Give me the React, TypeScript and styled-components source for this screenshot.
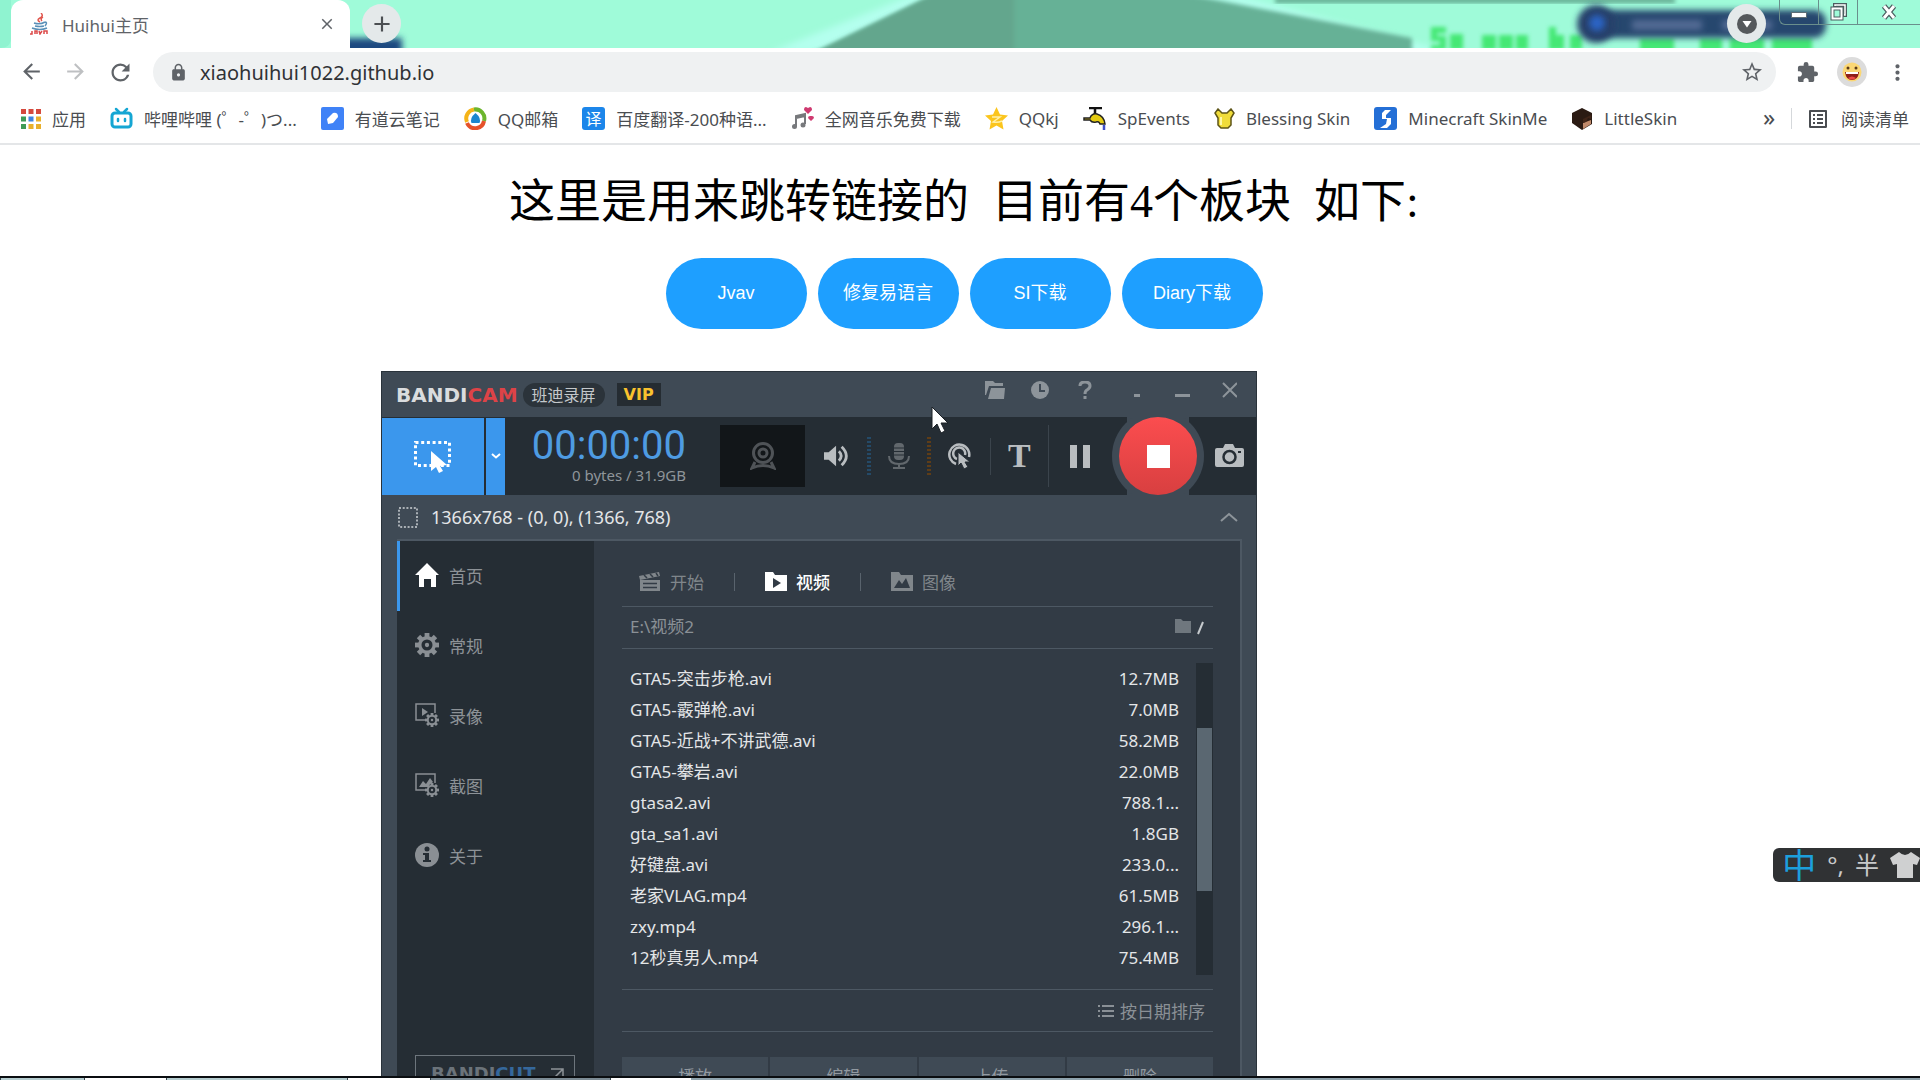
import React from "react";
import styled, { createGlobalStyle } from "styled-components";
import {
  MdAdd,
  MdArrowBack,
  MdArrowForward,
  MdClose,
  MdExtension,
  MdListAlt,
  MdLock,
  MdMoreVert,
  MdRefresh,
  MdStarBorder,
} from "react-icons/md";

const UI_FONT = `"Noto Sans", "Noto Sans CJK SC", sans-serif`;
const LOGO_FONT = `"DejaVu Sans", "Noto Sans CJK SC", sans-serif`;

const c = {
  panel: "#3f4a55",
  dark: "#252d34",
  body: "#323b45",
  line: "#4d5863",
  blue: "#3b97ed",
  grey: "#80868b",
  light: "#e4e6e8",
};

const GlobalStyle = createGlobalStyle`
  * { box-sizing: border-box; }
  body { margin: 0; font-family: ${UI_FONT}; background: #fff; }
  button { font: inherit; border: 0; padding: 0; background: none; color: inherit; cursor: pointer; }
  a { color: inherit; text-decoration: none; }
  svg { display: block; flex: none; }
`;

/* ---------- browser ---------- */

const Screen = styled.div`
  display: flex;
  flex-direction: column;
  height: 100vh;
  overflow: hidden;
`;

const TabStrip = styled.div`
  position: relative;
  display: flex;
  height: 48px;
  padding-left: 11px;
  background: #9ffbd9;
`;

const Wallpaper = styled.svg`
  position: absolute;
  inset: 0;
  width: 100%;
  height: 100%;
`;

const BrowserTab = styled.div`
  position: relative;
  display: flex;
  align-items: center;
  gap: 11px;
  width: 339px;
  padding: 0 14px 0 18px;
  border-radius: 12px 12px 0 0;
  background: #fff;
  color: #5f6368;
  font-size: 17px;
`;

const TabTitle = styled.span`
  flex: 1;
`;

const RoundButton = styled.button`
  position: relative;
  display: flex;
  align-items: center;
  justify-content: center;
  width: 39px;
  height: 39px;
  margin: 4px 0 0 12px;
  border-radius: 50%;
  background: #e4e9ea;
  color: #4b4f52;
`;

const StripEnd = styled.div`
  display: flex;
  gap: 13px;
  margin-left: auto;
`;

const WindowControls = styled.div`
  position: relative;
  display: flex;
  width: 141px;
  height: 25px;
  border: 1px solid #6a8f8c;
  border-width: 0 0 1px 1px;
  border-radius: 0 0 0 6px;
`;

const WindowControl = styled.button<{ $grow?: boolean }>`
  display: flex;
  align-items: center;
  justify-content: center;
  flex: ${(p) => (p.$grow ? 1 : "none")};
  width: 39px;
  border-right: ${(p) => (p.$grow ? 0 : "1px solid #6a8f8c")};
`;

const Toolbar = styled.div`
  display: flex;
  align-items: center;
  height: 48px;
  padding: 0 10px 0 19px;
  color: #5f6368;
`;

const NavButtons = styled.div`
  display: flex;
  gap: 19px;
`;

const IconButton = styled.button<{ $faded?: boolean }>`
  display: flex;
  opacity: ${(p) => (p.$faded ? 0.4 : 1)};
`;

const Omnibox = styled.form`
  display: flex;
  align-items: center;
  flex: 1;
  gap: 12px;
  height: 40px;
  margin: 0 20px 0 19px;
  padding: 0 12px 0 16px;
  border-radius: 20px;
  background: #eff1f2;
`;

const Address = styled.input`
  flex: 1;
  min-width: 0;
  padding: 0;
  border: 0;
  outline: 0;
  background: none;
  color: #303236;
  font: 20px ${UI_FONT};
`;

const ToolbarEnd = styled.div`
  display: flex;
  align-items: center;
  gap: 18px;
`;

const Bookmarks = styled.nav`
  display: flex;
  align-items: center;
  gap: 24px;
  height: 49px;
  padding: 0 11px 2px 21px;
  border-bottom: 2px solid #e4e6e8;
  color: #4a4d51;
  font-size: 17px;
  white-space: nowrap;
`;

const Bookmark = styled.a`
  display: flex;
  align-items: center;
  gap: 11px;
`;

const BookmarksEnd = styled.div`
  display: flex;
  align-items: center;
  gap: 14px;
  margin-left: auto;
`;

const Chevrons = styled.button`
  width: 16px;
  padding-bottom: 4px;
  font-size: 24px;
  line-height: 24px;
`;

const Rule = styled.span<{ $h: number; $color: string }>`
  flex: none;
  width: 1px;
  height: ${(p) => p.$h}px;
  background: ${(p) => p.$color};
`;

/* ---------- page ---------- */

const Page = styled.main`
  position: relative;
  flex: 1;
  min-height: 0;
  padding: 29px 0 0 8px;
  overflow: hidden;
  text-align: center;
`;

const Heading = styled.h1`
  margin: 0 0 28px;
  color: #000;
  font: 400 46px/56px "Liberation Serif", "Noto Sans CJK SC", serif;
  white-space: pre;
`;

const Links = styled.div`
  display: flex;
  justify-content: center;
  gap: 11px;
`;

const PillLink = styled.a`
  width: 141px;
  border-radius: 36px;
  background: #1e9fff;
  color: #fff;
  font: 18px/71px "Liberation Sans", "Noto Sans CJK SC", sans-serif;
`;

const Pointer = styled.svg`
  position: absolute;
  left: 931px;
  top: 261px;
`;

const Ime = styled.div`
  position: absolute;
  right: 0;
  top: 703px;
  display: flex;
  align-items: center;
  gap: 11px;
  height: 34px;
  padding-left: 9px;
  border-radius: 6px 0 0 6px;
  background: #303234;
  color: #c9cacb;
  font-size: 24px;
  line-height: 34px;
`;

const ImeMode = styled.span`
  color: #1c9fdc;
  font-size: 34px;
`;

const TaskbarEdge = styled.div`
  display: flex;
  height: 4px;
  border-top: 2px solid #0a0d10;
  background: #8fa3ad;
`;

const TaskButton = styled.span<{ $w: number; $color: string }>`
  width: ${(p) => p.$w}px;
  border-left: 1px solid #35424a;
  background: ${(p) => p.$color};
`;

/* ---------- recorder window ---------- */

const Recorder = styled.section`
  position: absolute;
  left: 381px;
  top: 226px;
  width: 876px;
  border: 1px solid #2a333b;
  background: ${c.panel};
  color: ${c.light};
  font-size: 17px;
  text-align: left;
`;

const TitleBar = styled.header`
  display: flex;
  align-items: center;
  height: 45px;
  padding: 0 19px 0 14px;
`;

const Brand = styled.span<{ $size: number; $color: string; $accent: string }>`
  color: ${(p) => p.$color};
  font: 700 ${(p) => p.$size}px/24px ${LOGO_FONT};

  b {
    color: ${(p) => p.$accent};
  }
`;

const Edition = styled.span`
  margin-left: 5px;
  padding: 0 9px;
  border-radius: 12px;
  background: #2b333a;
  color: #c4c8cb;
  font-size: 16px;
  line-height: 24px;
`;

const Vip = styled.span`
  margin-left: 12px;
  padding: 0 7px;
  background: #252c32;
  color: #f9c22e;
  font: 700 16px/23px ${LOGO_FONT};
`;

const TitleTools = styled.div`
  display: flex;
  align-items: center;
  gap: 26px;
  margin: 0 0 10px auto;
  color: #8d949a;
`;

const ControlBar = styled.div`
  display: flex;
  align-items: center;
  height: 78px;
  background: ${c.dark};
`;

const AreaButton = styled.button<{ $w: number }>`
  display: flex;
  align-items: center;
  justify-content: center;
  width: ${(p) => p.$w}px;
  height: 77px;
  margin-right: 2px;
  background: ${c.blue};
`;

const Clock = styled.div`
  width: 179px;
  text-align: right;
`;

const Timer = styled.div`
  color: #4e9be2;
  font: 400 40px/38px Roboto, sans-serif;
`;

const Usage = styled.div`
  color: #8f959a;
  font-size: 15px;
  line-height: 20px;
`;

const Webcam = styled.div`
  display: flex;
  align-items: center;
  justify-content: center;
  width: 85px;
  height: 62px;
  margin-left: 34px;
  background: #121619;
`;

const Devices = styled.div`
  display: flex;
  align-items: center;
  gap: 17px;
  padding-left: 19px;
`;

const PauseSlot = styled.div`
  display: flex;
  justify-content: center;
  flex: 1;
`;

const Meter = styled.span<{ $color: string }>`
  width: 4px;
  height: 38px;
  background: repeating-linear-gradient(${(p) => p.$color} 0 2px, transparent 2px 4px);
`;

const TextTool = styled.span`
  font: 700 34px/34px "Liberation Serif", serif;
  color: #b9bdc0;
`;

const RecordWell = styled.div`
  display: flex;
  align-items: center;
  height: 78px;
  margin-right: 11px;
`;

const RegionRow = styled.div`
  display: flex;
  align-items: center;
  gap: 13px;
  height: 44px;
  padding: 0 18px 0 16px;
  font-size: 18px;
  line-height: 24px;
`;

const RegionText = styled.span`
  flex: 1;
`;

const Workspace = styled.div`
  display: flex;
  margin: 0 14px 0 15px;
  border: 1px solid ${c.line};
  border-width: 2px 2px 0 0;
  background: ${c.body};
`;

const Sidebar = styled.nav`
  display: flex;
  flex-direction: column;
  width: 197px;
  background: ${c.dark};
`;

const MenuItem = styled.a<{ $active?: boolean }>`
  display: flex;
  align-items: center;
  gap: 10px;
  height: 70px;
  padding: 0 0 2px 15px;
  border-left: 3px solid ${(p) => (p.$active ? c.blue : "transparent")};
  color: #8d9297;
`;

const CutLink = styled.a`
  display: flex;
  align-items: center;
  justify-content: space-between;
  height: 38px;
  margin: auto 19px 0 18px;
  padding: 0 10px 0 15px;
  border: 1px solid #6d757c;
  color: #8d9297;
`;

const Content = styled.div`
  flex: 1;
  padding: 16px 27px 0 28px;
`;

const MediaTabs = styled.div`
  display: flex;
  align-items: center;
  gap: 30px;
  height: 50px;
  padding-left: 17px;
  border-bottom: 1px solid ${c.line};
`;

const MediaTab = styled.button<{ $active?: boolean }>`
  display: flex;
  align-items: center;
  gap: 9px;
  color: ${(p) => (p.$active ? "#fff" : c.grey)};
  font-weight: ${(p) => (p.$active ? 500 : 400)};
`;

const PathRow = styled.div<{ $end?: boolean }>`
  display: flex;
  align-items: center;
  justify-content: ${(p) => (p.$end ? "flex-end" : "flex-start")};
  gap: 4px;
  height: 42px;
  padding: 0 8px 4px;
  border-bottom: 1px solid ${c.line};
  color: #8a9096;
`;

const PathText = styled.span`
  flex: 1;
`;

const SortButton = styled.button`
  display: flex;
  align-items: center;
  gap: 6px;
  padding-top: 4px;
`;

const FileArea = styled.div`
  display: flex;
  gap: 17px;
  padding: 14px 0;
  border-bottom: 1px solid ${c.line};
`;

const FileTable = styled.table`
  flex: 1;
  align-self: flex-start;
  border-collapse: collapse;

  td {
    height: 31px;
    padding: 0 0 0 8px;
    line-height: 24px;
  }
  td:last-child {
    padding: 0;
    text-align: right;
  }
`;

const Track = styled.div`
  width: 17px;
  padding: 65px 1px 84px;
  background: ${c.dark};
`;

const Thumb = styled.div`
  height: 163px;
  background: #5a6771;
`;

const Actions = styled.div`
  display: grid;
  grid-template-columns: repeat(4, 1fr);
  gap: 2px;
  padding-top: 25px;
`;

const Action = styled.button`
  height: 36px;
  background: ${c.panel};
  color: #9299a0;
`;

/* ---------- drawings ---------- */

const Gear = ({ x, y, r, color, hole }: { x: number; y: number; r: number; color: string; hole: string }) => (
  <g transform={`translate(${x} ${y})`} fill={color}>
    {[0, 45, 90, 135].map((a) => (
      <rect key={a} x={-r * 0.2} y={-r} width={r * 0.4} height={r * 2} transform={`rotate(${a})`} />
    ))}
    <circle r={r * 0.74} />
    <circle r={r * 0.46} fill={hole} />
    <circle r={r * 0.18} />
  </g>
);

const bookmarks: { label: string; icon: React.ReactNode }[] = [
  {
    label: "应用",
    icon: (
      <svg width="20" height="20" viewBox="0 0 20 20">
        {["#d5493d", "#d5493d", "#d5493d", "#3f9b56", "#3f83e0", "#e8b02c", "#3f9b56", "#e8b02c", "#e8b02c"].map(
          (f, i) => (
            <rect key={i} x={(i % 3) * 7.5} y={Math.floor(i / 3) * 7.5} width="5" height="5" fill={f} />
          ),
        )}
      </svg>
    ),
  },
  {
    label: "哔哩哔哩 (゜-゜)つ...",
    icon: (
      <svg width="23" height="23" viewBox="0 0 23 23" fill="none" stroke="#15a6d3" strokeWidth="3" strokeLinecap="round">
        <rect x="2" y="6" width="19" height="14" rx="3" />
        <path d="M6 2l3 3M17 2l-3 3M8 12v2M15 12v2" strokeWidth="2.5" />
      </svg>
    ),
  },
  {
    label: "有道云笔记",
    icon: (
      <svg width="23" height="23" viewBox="0 0 23 23">
        <rect width="23" height="23" rx="2" fill="#3f82f7" />
        <path d="M7 17l-1-5 6-6q5-1 5 4l-5 6z" fill="#fff" />
      </svg>
    ),
  },
  {
    label: "QQ邮箱",
    icon: (
      <svg width="23" height="23" viewBox="0 0 23 23" fill="none" strokeWidth="4">
        <path d="M3 15A9 9 0 0 1 10 2.500" stroke="#f5b419" />
        <path d="M10 2.500A9 9 0 0 1 20 14" stroke="#6cb52d" />
        <path d="M20 14A9 9 0 0 1 3 16" stroke="#e5512a" />
        <path d="M11.500 6q6 5 4 10h-8q-2-5 4-10z" fill="#1b86cf" />
      </svg>
    ),
  },
  {
    label: "百度翻译-200种语...",
    icon: (
      <svg width="23" height="23" viewBox="0 0 23 23">
        <rect width="23" height="23" rx="3" fill="#1c86ea" />
        <text x="11.500" y="17.500" textAnchor="middle" fill="#fff" fontSize="16" fontFamily="Noto Sans CJK SC">
          译
        </text>
      </svg>
    ),
  },
  {
    label: "全网音乐免费下载",
    icon: (
      <svg width="23" height="23" viewBox="0 0 23 23">
        <path d="M5 19V9l9-2v10M5 11l9-2" fill="none" stroke="#77797c" strokeWidth="2" />
        <circle cx="3.500" cy="19.500" r="2.500" fill="#77797c" />
        <circle cx="12" cy="18" r="2.500" fill="#77797c" />
        <path d="M17 7l-4-4q0-3 2-3l2 1 2-1q2 0 2 3zM20 14l-3-3q0-2 2-2h2q2 0 2 2z" fill="#cf3a70" />
      </svg>
    ),
  },
  {
    label: "QQkj",
    icon: (
      <svg width="23" height="23" viewBox="0 0 23 23">
        <path d="M11.500 0l3.500 7.500 8 1-6 5.500 1.500 8.500-7-4-7 4L6 14 0 8.500l8-1z" fill="#fbc51d" />
        <path d="M7 10h8l-7 5q5 1 9-1" fill="none" stroke="#fff0a8" strokeWidth="1.500" />
      </svg>
    ),
  },
  {
    label: "SpEvents",
    icon: (
      <svg width="24" height="23" viewBox="0 0 24 23">
        <path d="M6 1h13M12 1v6" stroke="#111" strokeWidth="2.500" />
        <path d="M1 11h6q2-5 7-4 7 2 8 10h-5q-1-3-4-2-4 1-6-2H1z" fill="#e4cb12" stroke="#222" strokeWidth="1.500" />
        <path d="M21 18v5" stroke="#3e4fc9" strokeWidth="2.500" />
      </svg>
    ),
  },
  {
    label: "Blessing Skin",
    icon: (
      <svg width="21" height="21" viewBox="0 0 21 21">
        <path
          d="M4 1l4 4h5l4-4 3 4-3 5v7l-3 3H7l-3-3v-7L1 5z"
          fill="#f0dc3a"
          stroke="#5d5417"
          strokeWidth="1.500"
        />
        <path d="M7 9v8" stroke="#fff8a8" strokeWidth="2" />
      </svg>
    ),
  },
  {
    label: "Minecraft SkinMe",
    icon: (
      <svg width="23" height="23" viewBox="0 0 23 23">
        <rect width="23" height="23" rx="3" fill="#246fd6" />
        <path d="M17 3h-6L8 6v6h5l-1 5-6 4h7l4-4v-6h-5V8z" fill="#fff" />
      </svg>
    ),
  },
  {
    label: "LittleSkin",
    icon: (
      <svg width="22" height="22" viewBox="0 0 22 22">
        <path d="M11 0l10 5v11l-10 6L1 15V5z" fill="#2b1b13" />
        <path d="M12 15l8-3v4l-8 5z" fill="#c08a6b" />
        <path d="M12 11l8-4v4l-3-1-2 4-3 1z" fill="#402518" />
      </svg>
    ),
  },
];

const MenuIcon = ({ kind }: { kind: string }) => {
  const g = "#8a8f94";
  return (
    <svg width="24" height="24" viewBox="0 0 24 24" fill={g}>
      {kind === "home" && <path d="M12 0l12 12h-3v12h-5v-8H9v8H4V12H0z" fill="#fff" />}
      {kind === "gear" && <Gear x={12} y={12} r={12} color={g} hole={c.dark} />}
      {(kind === "video" || kind === "shot") && (
        <>
          <path d="M10 17H1V1h19v9" fill="none" stroke={g} strokeWidth="1.500" />
          {kind === "video" ? (
            <path d="M7 5l6 4-6 4z" />
          ) : (
            <path d="M4 14l4-6 3 3 4-6 3 4-6 5z" />
          )}
          <Gear x={17} y={17} r={7} color={g} hole={c.dark} />
        </>
      )}
      {kind === "info" && (
        <>
          <circle cx="12" cy="12" r="12" />
          <circle cx="12" cy="6" r="2.500" fill={c.dark} />
          <path d="M8 10h6v7h2v2H8v-2h2v-5H8z" fill={c.dark} />
        </>
      )}
    </svg>
  );
};

const TabIcon = ({ kind, active }: { kind: string; active?: boolean }) => (
  <svg width="22" height="19" viewBox="0 0 22 19" fill={active ? "#fff" : c.grey}>
    {kind === "start" ? (
      <>
        <path d="M0 4l20-4 1 4L1 8z" />
        <path d="M5 3l3 3M11 2l3 3M17 1l2 3" stroke={c.body} strokeWidth="1.500" />
        <path d="M1 8h20v11H1z" />
        <path d="M4 11.500h14M4 15.500h14" stroke={c.body} strokeWidth="1.500" />
      </>
    ) : (
      <>
        <path d="M0 0h8l2 3h12v16H0z" />
        {kind === "video" ? (
          <path d="M8 6l8 5-8 5z" fill={c.body} />
        ) : (
          <path d="M3 16l5-8 3 4 4-6 4 10z" fill={c.body} />
        )}
      </>
    )}
  </svg>
);

const menu = [
  ["home", "首页"],
  ["gear", "常规"],
  ["video", "录像"],
  ["shot", "截图"],
  ["info", "关于"],
];

const files = [
  ["GTA5-突击步枪.avi", "12.7MB"],
  ["GTA5-霰弹枪.avi", "7.0MB"],
  ["GTA5-近战+不讲武德.avi", "58.2MB"],
  ["GTA5-攀岩.avi", "22.0MB"],
  ["gtasa2.avi", "788.1..."],
  ["gta_sa1.avi", "1.8GB"],
  ["好键盘.avi", "233.0..."],
  ["老家VLAG.mp4", "61.5MB"],
  ["zxy.mp4", "296.1..."],
  ["12秒真男人.mp4", "75.4MB"],
];

const BrowserChrome = () => (
  <header>
    <TabStrip>
      <Wallpaper viewBox="0 0 1920 48" preserveAspectRatio="none" aria-hidden="true">
        <defs>
          <filter id="soft" x="-20%" y="-50%" width="140%" height="200%">
            <feGaussianBlur stdDeviation="3" />
          </filter>
          <filter id="edge" x="-5%" y="-20%" width="110%" height="140%">
            <feGaussianBlur stdDeviation="2" />
          </filter>
        </defs>
        <path d="M770 52L910-4h330l210 56z" fill="#b4ffee" filter="url(#soft)" />
        <path d="M812 54L935-6h250l227 44v16z" fill="#66b196" filter="url(#edge)" />
        <path d="M812 54L935-6h79v60z" fill="#64a68d" filter="url(#edge)" />
        <path d="M1275-2h400v5h-400z" fill="#5fa68c" filter="url(#edge)" />
        <g fill="#45e874" filter="url(#edge)">
          <path d="M1431 27h15v6h-9v3h9v14h-15v-5h9v-4h-9zM1450 34h13v16h-13z" />
          <path d="M1482 35h14v15h-14zM1499 35h14v15h-14zM1516 35h12v15h-12zM1549 27h7v8h8v15h-15zM1570 35h12v15h-12z" />
          <path d="M1640 38h34v14h-34zM1700 38h22v14h-22zM1730 38h34v14h-34zM1772 38h40v14h-40z" />
        </g>
        <rect x="1590" y="10" width="236" height="28" rx="12" fill="#28466e" filter="url(#soft)" />
        <circle cx="1596" cy="24" r="19" fill="#25406a" filter="url(#soft)" />
        <circle cx="1597" cy="23" r="8" fill="#2c63c4" filter="url(#soft)" />
        <path d="M1632 20h70v10h-70zM1722 20h50v10h-50z" fill="#536a94" filter="url(#soft)" />
        <rect x="340" y="38" width="62" height="18" fill="#1f4a80" filter="url(#soft)" />
        <path d="M0 48V0h11v38q0 10-11 10z" fill="#8ff3d0" />
      </Wallpaper>
      <BrowserTab>
        <svg width="22" height="22" viewBox="0 0 22 22" fill="none">
          <path d="M12 0q3 3-1 5t0 4M14 4q-3 2-1 4" stroke="#e0574f" strokeWidth="1.500" />
          <path d="M5 10q6 2 11-1M6 13q5 1 9 0M3 15q8 3 15 0M16 9q3 0 0 4" stroke="#5a90b8" strokeWidth="1.500" />
          <path d="M3 18v3H1M6 21v-3h2v3M10 18l1 3 2-3M15 21v-3h3v3" stroke="#dc4a4a" strokeWidth="1.500" />
        </svg>
        <TabTitle>Huihui主页</TabTitle>
        <IconButton aria-label="关闭标签页">
          <MdClose size={18} />
        </IconButton>
      </BrowserTab>
      <RoundButton aria-label="新标签页">
        <MdAdd size={26} />
      </RoundButton>
      <StripEnd>
        <RoundButton aria-label="搜索标签页">
          <svg width="22" height="22" viewBox="0 0 22 22">
            <circle cx="11" cy="11" r="10" fill="#55595c" />
            <path d="M6.500 8h9L11 14.500z" fill="#fff" />
          </svg>
        </RoundButton>
        <WindowControls>
          <WindowControl aria-label="最小化">
            <svg width="16" height="16" viewBox="0 0 16 16">
              <rect x="0.500" y="8.500" width="15" height="5" fill="#fff" stroke="#5d6c75" />
            </svg>
          </WindowControl>
          <WindowControl aria-label="还原">
            <svg width="18" height="18" viewBox="0 0 18 18" fill="none">
              <path d="M6 4V2h10v10h-2" stroke="#4b5c5f" strokeWidth="4" />
              <path d="M6 3V2h10v10h-1" stroke="#fff" strokeWidth="1.500" />
              <rect x="3.500" y="5.500" width="9" height="10" stroke="#4b5c5f" strokeWidth="4" />
              <rect x="3.500" y="5.500" width="9" height="10" stroke="#fff" strokeWidth="2" />
            </svg>
          </WindowControl>
          <WindowControl $grow aria-label="关闭">
            <svg width="16" height="16" viewBox="0 0 16 16">
              <path d="M3 2l10 12M13 2L3 14" stroke="#4b5c5f" strokeWidth="5.500" />
              <path d="M3 2l10 12M13 2L3 14" stroke="#fff" strokeWidth="3" />
            </svg>
          </WindowControl>
        </WindowControls>
      </StripEnd>
    </TabStrip>

    <Toolbar>
      <NavButtons>
        <IconButton aria-label="后退">
          <MdArrowBack size={25} />
        </IconButton>
        <IconButton $faded aria-label="前进">
          <MdArrowForward size={25} />
        </IconButton>
        <IconButton aria-label="重新加载">
          <MdRefresh size={27} />
        </IconButton>
      </NavButtons>
      <Omnibox>
        <MdLock size={19} />
        <Address aria-label="地址" defaultValue="xiaohuihui1022.github.io" />
        <IconButton type="button" aria-label="添加书签">
          <MdStarBorder size={24} />
        </IconButton>
      </Omnibox>
      <ToolbarEnd>
        <IconButton aria-label="扩展程序">
          <MdExtension size={23} />
        </IconButton>
        <IconButton aria-label="个人资料">
          <svg width="30" height="30" viewBox="0 0 30 30">
            <circle cx="15" cy="15" r="15" fill="#dcdcdc" />
            <circle cx="15" cy="15" r="9.500" fill="#fbd774" />
            <circle cx="11" cy="11" r="1.500" fill="#5a3a1a" />
            <circle cx="19" cy="11" r="1.500" fill="#5a3a1a" />
            <path d="M8 15h14q-1 8-7 8t-7-8z" fill="#8f1f18" />
            <path d="M9 15h12v2H9z" fill="#fff" />
            <path d="M11 21q4-3 8 0-4 3-8 0z" fill="#ef4b45" />
          </svg>
        </IconButton>
        <IconButton aria-label="菜单">
          <MdMoreVert size={25} />
        </IconButton>
      </ToolbarEnd>
    </Toolbar>

    <Bookmarks>
      {bookmarks.map((b) => (
        <Bookmark key={b.label} href="#">
          {b.icon}
          {b.label}
        </Bookmark>
      ))}
      <BookmarksEnd>
        <Chevrons aria-label="更多书签">»</Chevrons>
        <Rule $h={21} $color="#d5d8db" />
        <Bookmark href="#">
          <MdListAlt size={24} />
          阅读清单
        </Bookmark>
      </BookmarksEnd>
    </Bookmarks>
  </header>
);

const RecorderWindow = () => (
  <Recorder>
    <TitleBar>
      <Brand $size={20} $color="#dadcde" $accent="#dd4347">
        BANDI<b>CAM</b>
      </Brand>
      <Edition>班迪录屏</Edition>
      <Vip>VIP</Vip>
      <TitleTools>
        <IconButton aria-label="打开文件夹">
          <svg width="20" height="18" viewBox="0 0 20 18" fill="currentColor">
            <path d="M0 14V0h8l2 2h8v3H4L1 14z" />
            <path d="M6 7h14l-1 11H3z" />
          </svg>
        </IconButton>
        <IconButton aria-label="定时录制">
          <svg width="18" height="18" viewBox="0 0 18 18">
            <circle cx="9" cy="9" r="9" fill="currentColor" />
            <path d="M9 3v7h5" fill="none" stroke={c.panel} strokeWidth="2" />
          </svg>
        </IconButton>
        <IconButton aria-label="帮助">
          <svg width="20" height="18" viewBox="0 0 20 18" fill="none" stroke="currentColor" strokeWidth="3">
            <path d="M5 5q0-4 5-4t5 4q0 2-3 4-2 1-2 4M10 15v3" />
          </svg>
        </IconButton>
        <IconButton aria-label="最小化到托盘">
          <svg width="28" height="18" viewBox="0 0 28 18" fill="currentColor">
            <rect x="13" y="13" width="6" height="3" />
          </svg>
        </IconButton>
        <IconButton aria-label="最小化">
          <svg width="18" height="18" viewBox="0 0 18 18" fill="currentColor">
            <rect x="0" y="13" width="15" height="3" />
          </svg>
        </IconButton>
        <IconButton aria-label="关闭">
          <svg width="18" height="18" viewBox="0 0 18 18" stroke="currentColor" strokeWidth="2">
            <path d="M4 2l14 14M18 2L4 16" />
          </svg>
        </IconButton>
      </TitleTools>
    </TitleBar>

    <ControlBar>
      <AreaButton $w={102} aria-label="矩形录制">
        <svg width="38" height="34" viewBox="0 0 38 34">
          <rect x="1.500" y="3.500" width="34" height="23" fill="none" stroke="#fff" strokeWidth="3" strokeDasharray="3 2.700" />
          <path d="M17 12v20l5-4 3 6 4-2-3-5 7-1z" fill="#fff" />
        </svg>
      </AreaButton>
      <AreaButton $w={19} aria-label="录制模式">
        <svg width="10" height="6" viewBox="0 0 10 6" fill="none" stroke="#fff" strokeWidth="2">
          <path d="M1 1l4 3.500L9 1" />
        </svg>
      </AreaButton>
      <Clock>
        <Timer>00:00:00</Timer>
        <Usage>0 bytes / 31.9GB</Usage>
      </Clock>
      <Webcam>
        <svg width="26" height="28" viewBox="0 0 26 28" fill="none" stroke="#4f5357" strokeWidth="3">
          <circle cx="13" cy="11" r="9.500" />
          <circle cx="13" cy="11" r="4" />
          <path d="M5 20l-3 6q11-5 22 0l-3-6" />
        </svg>
      </Webcam>
      <Devices>
        <IconButton aria-label="扬声器">
          <svg width="26" height="24" viewBox="0 0 28 24" fill="none" stroke="#b9bdc0" strokeWidth="3">
            <path d="M0 8h5l8-7v22l-8-7H0z" fill="#b9bdc0" stroke="none" />
            <path d="M16 7q5 5 0 10M19 2q10 10 0 20" />
          </svg>
        </IconButton>
        <Meter $color="#244a68" />
        <IconButton aria-label="麦克风">
          <svg width="22" height="26" viewBox="0 0 22 26" fill="none" stroke="#62686d" strokeWidth="2">
            <rect x="6" y="0" width="10" height="17" rx="4" fill="#62686d" stroke="none" />
            <path d="M1 13q0 8 10 8t10-8M11 21v4M5 25h12" />
            <path d="M6 5h10M6 8.500h10M6 12h10" stroke={c.dark} strokeWidth="1" />
          </svg>
        </IconButton>
        <Meter $color="#5f3d17" />
        <IconButton aria-label="鼠标效果">
          <svg width="25" height="26" viewBox="0 0 25 26" fill="none" stroke="#b9bdc0" strokeWidth="2.500">
            <path d="M8 21a10 10 0 1 1 13-7M9 16a6 6 0 1 1 8-4" />
            <path d="M10 9v14l3-3 3 6 4-2-3-5h5z" fill="#b9bdc0" stroke={c.dark} strokeWidth="1" />
          </svg>
        </IconButton>
        <Rule $h={37} $color="#3b444c" />
        <IconButton aria-label="文字">
          <TextTool>T</TextTool>
        </IconButton>
        <Rule $h={62} $color="#3b444c" />
      </Devices>
      <PauseSlot>
        <IconButton aria-label="暂停">
          <svg width="20" height="23" viewBox="0 0 20 23" fill="#b9bdc0">
            <path d="M0 0h7v23H0zM13 0h7v23h-7z" />
          </svg>
        </IconButton>
      </PauseSlot>
      <RecordWell>
        <IconButton aria-label="停止">
          <svg width="92" height="78" viewBox="0 0 92 78">
            <defs>
              <linearGradient id="rec" x2="0" y2="1">
                <stop stopColor="#fb4d4f" />
                <stop offset="1" stopColor="#d83f40" />
              </linearGradient>
            </defs>
            <path d="M15 0h62v78H15z" fill={c.panel} />
            <circle cx="46" cy="39" r="46" fill={c.panel} />
            <circle cx="46" cy="39" r="39" fill="url(#rec)" />
            <path d="M35 28h23v23H35z" fill="#fff" />
          </svg>
        </IconButton>
      </RecordWell>
      <IconButton aria-label="截图">
        <svg width="41" height="24" viewBox="0 0 41 24">
          <path d="M2 4h6l2-4h8l2 4h7q2 0 2 2v15q0 2-2 2H2q-2 0-2-2V6q0-2 2-2z" fill="#b9bdc0" />
          <circle cx="14.500" cy="13" r="6" fill="none" stroke={c.dark} strokeWidth="2.500" />
          <rect x="23" y="7" width="3" height="2" fill={c.dark} />
        </svg>
      </IconButton>
    </ControlBar>

    <RegionRow>
      <svg width="20" height="21" viewBox="0 0 20 21" fill="none" stroke="#cfd3d6" strokeWidth="1.500">
        <rect x="1" y="1" width="18" height="19" strokeDasharray="2 1.700" />
      </svg>
      <RegionText>1366x768 - (0, 0), (1366, 768)</RegionText>
      <IconButton aria-label="收起">
        <svg width="18" height="10" viewBox="0 0 18 10" fill="none" stroke="#8d949a" strokeWidth="2">
          <path d="M1 9l8-7 8 7" />
        </svg>
      </IconButton>
    </RegionRow>

    <Workspace>
      <Sidebar>
        {menu.map(([kind, label], i) => (
          <MenuItem key={kind} href="#" $active={i === 0}>
            <MenuIcon kind={kind} />
            {label}
          </MenuItem>
        ))}
        <CutLink href="#">
          <Brand $size={18} $color="#6b737a" $accent="#35689c">
            BANDI<b>CUT</b>
          </Brand>
          <svg width="13" height="13" viewBox="0 0 13 13" fill="none" stroke="#8d9297" strokeWidth="1.500">
            <path d="M0 1h12v12M12 1L1 12" />
          </svg>
        </CutLink>
      </Sidebar>
      <Content>
        <MediaTabs>
          <MediaTab>
            <TabIcon kind="start" />
            开始
          </MediaTab>
          <Rule $h={18} $color="#59636d" />
          <MediaTab $active>
            <TabIcon kind="video" active />
            视频
          </MediaTab>
          <Rule $h={18} $color="#59636d" />
          <MediaTab>
            <TabIcon kind="image" />
            图像
          </MediaTab>
        </MediaTabs>
        <PathRow>
          <PathText>E:\视频2</PathText>
          <svg width="16" height="14" viewBox="0 0 16 14" fill="#6f777e">
            <path d="M0 0h6l2 2h8v12H0z" />
          </svg>
          <svg width="10" height="18" viewBox="0 0 10 18" stroke="#c6cacd" strokeWidth="2">
            <path d="M8 5L3 17" />
          </svg>
        </PathRow>
        <FileArea>
          <FileTable>
            <tbody>
              {files.map(([name, size]) => (
                <tr key={name}>
                  <td>{name}</td>
                  <td>{size}</td>
                </tr>
              ))}
            </tbody>
          </FileTable>
          <Track>
            <Thumb />
          </Track>
        </FileArea>
        <PathRow $end>
          <SortButton>
            <svg width="16" height="12" viewBox="0 0 16 12" stroke="#8a9096" strokeWidth="2">
              <path d="M0 1h2M4 1h12M0 6h2M4 6h12M0 11h2M4 11h12" />
            </svg>
            按日期排序
          </SortButton>
        </PathRow>
        <Actions>
          <Action>播放</Action>
          <Action>编辑</Action>
          <Action>上传</Action>
          <Action>删除</Action>
        </Actions>
      </Content>
    </Workspace>
  </Recorder>
);

export default function App() {
  return (
    <Screen>
      <GlobalStyle />
      <BrowserChrome />
      <Page>
        <Heading>{"这里是用来跳转链接的  目前有4个板块  如下:"}</Heading>
        <Links>
          <PillLink href="#">Jvav</PillLink>
          <PillLink href="#">修复易语言</PillLink>
          <PillLink href="#">SI下载</PillLink>
          <PillLink href="#">Diary下载</PillLink>
        </Links>
        <RecorderWindow />
        <Pointer width="18" height="29" viewBox="0 0 18 29">
          <path d="M1 1v22l5-5 4 9 4-2-4-8h7z" fill="#fff" stroke="#1b2025" />
        </Pointer>
        <Ime>
          <ImeMode>中</ImeMode>
          <span>°,</span>
          <span>半</span>
          <svg width="30" height="26" viewBox="0 0 30 26" fill="#cfd0d1">
            <path d="M9 0q6 6 12 0l9 6-3 7-4-1v14H7V12l-4 1-3-7z" />
          </svg>
        </Ime>
      </Page>
      <TaskbarEdge>
        <TaskButton $w={84} $color="#b5cdd0" />
        <TaskButton $w={82} $color="#fff" />
        <TaskButton $w={181} $color="#b5cdd0" />
        <TaskButton $w={83} $color="#fff" />
        <TaskButton $w={180} $color="#7c8b94" />
        <TaskButton $w={81} $color="#fff" />
      </TaskbarEdge>
    </Screen>
  );
}
